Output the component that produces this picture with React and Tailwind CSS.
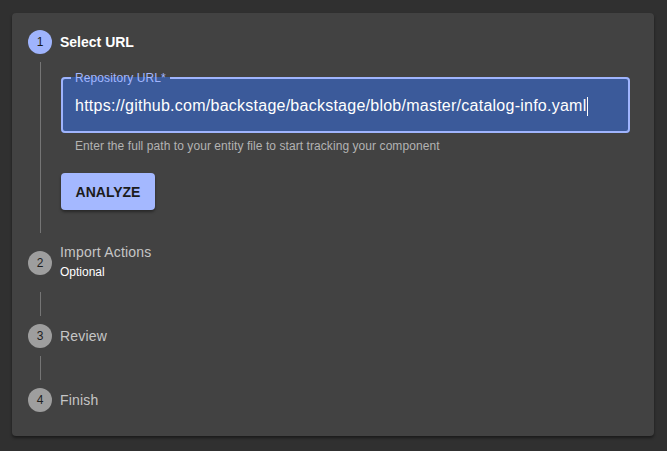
import React from "react";

const font = { fontFamily: '"Liberation Sans", Arial, sans-serif' };

const StepIcon = ({ n, active }) => (
  <div
    className={`w-6 h-6 rounded-full flex items-center justify-center text-xs shrink-0 ${
      active ? "bg-[#9fb4fd] text-[#1a1a1a]" : "bg-[#9e9e9e] text-[#1e1e1e]"
    }`}
  >
    {n}
  </div>
);

const Connector = () => (
  <div className="ml-3 mt-2 h-6 border-l border-[#757575]" />
);

export default function App() {
  return (
    <div className="min-h-[451px] bg-[#303030] pt-[13px] px-3" style={font}>
      <div className="w-[642px] bg-[#424242] rounded shadow-[0_2px_3px_rgba(0,0,0,0.45)] pt-[17px] pl-4 pr-4 pb-6">
        {/* Step 1 */}
        <div className="flex items-center gap-2 h-6">
          <StepIcon n="1" active />
          <span className="text-sm font-semibold text-white">Select URL</span>
        </div>
        <div className="ml-3 mt-2 border-l border-[#757575] pl-5 pr-2 pt-[10px] pb-[23px]">
          <fieldset className="m-0 min-w-0 border-2 border-[#9fb4fd] rounded bg-[#3b5a9a] pl-2 pr-3 pb-0 pt-0">
            <legend className="px-1 text-xs leading-3 tracking-[0.1px] text-[#a3b7ff]">
              Repository URL*
            </legend>
            <div className="h-[47px] pb-[3px] pl-1 flex items-center text-base tracking-[0.25px] text-white">
              <span>https://github.com/backstage/backstage/blob/master/catalog-info.yaml</span>
              <span className="inline-block w-px h-[19px] bg-white ml-px" />
            </div>
          </fieldset>
          <div className="mt-[3px] pl-[14px] text-xs leading-5 tracking-[0.07px] text-[#b3b3b3]">
            Enter the full path to your entity file to start tracking your component
          </div>
          <button className="mt-[17px] w-[94px] h-[37px] rounded bg-[#a4b8ff] text-sm font-bold text-[#1c1c1c] shadow-[0_2px_3px_rgba(0,0,0,0.4)]">
            ANALYZE
          </button>
        </div>

        {/* Step 2 */}
        <div className="flex items-start gap-2 mt-[9px]">
          <div className="mt-[9px]">
            <StepIcon n="2" />
          </div>
          <div className="flex flex-col">
            <span className="text-sm leading-5 tracking-[0.2px] text-[#c6c6c6]">Import Actions</span>
            <span className="text-xs leading-5 text-white">Optional</span>
          </div>
        </div>
        <div className="ml-3 mt-[10px] h-6 border-l border-[#757575]" />

        {/* Step 3 */}
        <div className="flex items-center gap-2 h-6 mt-2">
          <StepIcon n="3" />
          <span className="text-sm tracking-[0.2px] text-[#c6c6c6]">Review</span>
        </div>
        <Connector />

        {/* Step 4 */}
        <div className="flex items-center gap-2 h-6 mt-2">
          <StepIcon n="4" />
          <span className="text-sm tracking-[0.2px] text-[#c6c6c6]">Finish</span>
        </div>
      </div>
    </div>
  );
}
